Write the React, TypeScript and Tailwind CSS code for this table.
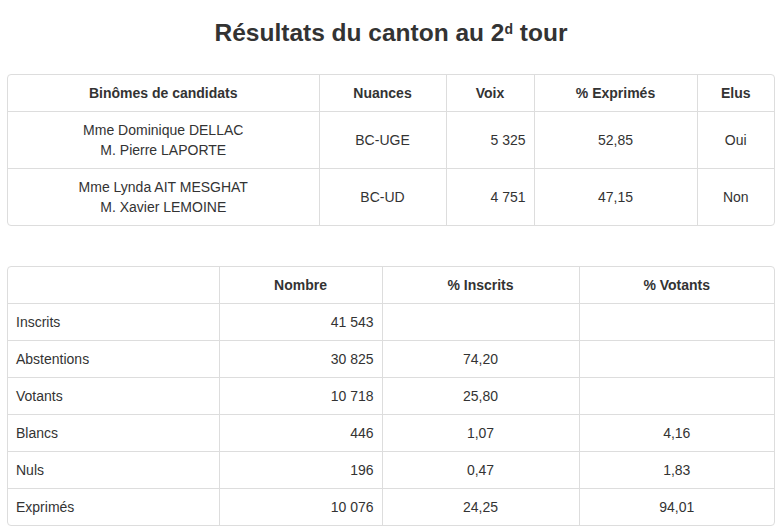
import React from 'react';

const candidats = [
  { noms: ['Mme Dominique DELLAC', 'M. Pierre LAPORTE'], nuance: 'BC-UGE', voix: '5 325', pct: '52,85', elu: 'Oui' },
  { noms: ['Mme Lynda AIT MESGHAT', 'M. Xavier LEMOINE'], nuance: 'BC-UD', voix: '4 751', pct: '47,15', elu: 'Non' },
];

const stats = [
  { label: 'Inscrits', nombre: '41 543', inscrits: '', votants: '' },
  { label: 'Abstentions', nombre: '30 825', inscrits: '74,20', votants: '' },
  { label: 'Votants', nombre: '10 718', inscrits: '25,80', votants: '' },
  { label: 'Blancs', nombre: '446', inscrits: '1,07', votants: '4,16' },
  { label: 'Nuls', nombre: '196', inscrits: '0,47', votants: '1,83' },
  { label: 'Exprimés', nombre: '10 076', inscrits: '24,25', votants: '94,01' },
];

const th = 'px-2 py-2 leading-5 font-bold text-center border-l border-[#ddd]';
const td = 'px-2 py-2 leading-5 border-t border-l border-[#ddd]';

const App: React.FC = () => {
  return (
    <div className="min-h-screen bg-white text-[14px] text-[#333] font-['Liberation_Sans',Arial,sans-serif] px-[7px]">
      <h3 className="pt-[20px] text-center text-[24.5px] font-bold leading-[1.1]">
        Résultats du canton au 2<sup className="text-[14px]">d</sup> tour
      </h3>

      {/* Candidats */}
      <div className="mt-[27px] w-[768px] border border-[#ddd] rounded-[4px] overflow-hidden">
        <table className="w-full border-collapse table-fixed">
          <colgroup>
            <col className="w-[311px]" />
            <col className="w-[127px]" />
            <col className="w-[88px]" />
            <col className="w-[163px]" />
            <col className="w-[77px]" />
          </colgroup>
          <thead>
            <tr>
              <th className={`${th} border-l-0`}>Binômes de candidats</th>
              <th className={th}>Nuances</th>
              <th className={th}>Voix</th>
              <th className={th}>% Exprimés</th>
              <th className={th}>Elus</th>
            </tr>
          </thead>
          <tbody>
            {candidats.map((c) => (
              <tr key={c.nuance}>
                <td className={`${td} border-l-0 text-center`}>
                  {c.noms[0]}
                  <br />
                  {c.noms[1]}
                </td>
                <td className={`${td} text-center`}>{c.nuance}</td>
                <td className={`${td} text-right`}>{c.voix}</td>
                <td className={`${td} text-center`}>{c.pct}</td>
                <td className={`${td} text-center`}>{c.elu}</td>
              </tr>
            ))}
          </tbody>
        </table>
      </div>

      {/* Participation */}
      <div className="mt-[40px] w-[768px] border border-[#ddd] rounded-[4px] overflow-hidden">
        <table className="w-full border-collapse table-fixed">
          <colgroup>
            <col className="w-[211px]" />
            <col className="w-[163px]" />
            <col className="w-[197px]" />
            <col className="w-[195px]" />
          </colgroup>
          <thead>
            <tr>
              <th className={`${th} border-l-0`}></th>
              <th className={th}>Nombre</th>
              <th className={th}>% Inscrits</th>
              <th className={th}>% Votants</th>
            </tr>
          </thead>
          <tbody>
            {stats.map((s) => (
              <tr key={s.label}>
                <td className={`${td} border-l-0 text-left`}>{s.label}</td>
                <td className={`${td} text-right`}>{s.nombre}</td>
                <td className={`${td} text-center`}>{s.inscrits}</td>
                <td className={`${td} text-center`}>{s.votants}</td>
              </tr>
            ))}
          </tbody>
        </table>
      </div>
    </div>
  );
};

export default App;
